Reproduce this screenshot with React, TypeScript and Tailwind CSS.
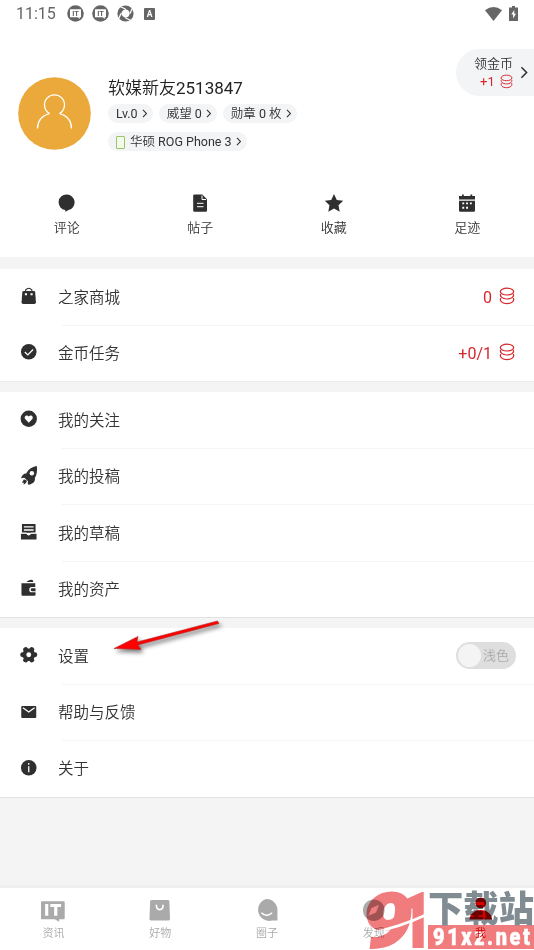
import type { ReactNode } from 'react';

type IconProps = { className?: string };

const CJK = "font-['Roboto','Noto_Sans_CJK_SC_DemiLight','Noto_Sans_CJK_SC',sans-serif]";

function Chevron({ className }: IconProps) {
    return (
        <svg viewBox="0 0 6 10" className={className} fill="none" stroke="currentColor" strokeWidth="1.2">
            <path d="M1 1l4 4-4 4" />
        </svg>
    );
}

function Coins({ className }: IconProps) {
    return (
        <svg viewBox="0 0 16 18" className={className} fill="none" stroke="#d8262c" strokeWidth="1.2">
            <ellipse cx="8" cy="4.6" rx="6.7" ry="3.4" />
            <path d="M1.8 6.8C.4 9.4 3.5 12 8 12s7.600-2.600 6.200-5.200" />
            <path d="M1.8 11C.2 13.800 3.200 16.600 8 16.600s7.800-2.800 6.200-5.600" />
        </svg>
    );
}

function ItBadge() {
    return (
        <svg viewBox="0 0 17 17" className="size-[17px]">
            <circle cx="8.5" cy="8.5" r="8.3" fill="#666" />
            <path d="M3 4.300h11v8h-1.300v1.700l-2-1.700H3z" fill="#fff" />
            <text x="8.5" y="11" fontSize="7.5" fontWeight="700" textAnchor="middle" fill="#666">IT</text>
        </svg>
    );
}

function StatusBar() {
    return (
        <div className="flex h-[27px] items-center pr-[15px] pl-4 text-[#666]">
            <span className="w-[51px] pt-px text-base">11:15</span>
            <div className="flex items-center gap-2">
                <ItBadge />
                <ItBadge />
                <svg viewBox="0 0 17 17" className="size-[17px]" fill="none">
                    <circle cx="8.5" cy="8.5" r="6" stroke="#666" strokeWidth="4.200" />
                    <path d="M8.5 4l4.500 4.500-4.500 4.500L4 8.500z" fill="#fff" />
                    <path d="M8.500 4L3 1.500M13 8.500L15.500 3M8.500 13l5.500 2.500M4 8.500L1.500 14" stroke="#fff" strokeWidth="1.300" />
                </svg>
            </div>
            <svg viewBox="0 0 11 12" className="ml-[10px] h-3 w-[11px]">
                <rect width="11" height="12" rx="1" fill="#666" />
                <text x="5.5" y="9" fontSize="8.5" fontWeight="700" textAnchor="middle" fill="#fff">A</text>
            </svg>
            <svg viewBox="0 0 17 14" className="ml-auto h-[14px] w-[17px]">
                <path d="M0 3.200Q8.500-3.200 17 3.200L8.500 14z" fill="#666" />
            </svg>
            <svg viewBox="0 0 9 15" className="-mt-px mr-px ml-[7px] h-[15px] w-[9px]">
                <path d="M3 0h3v1.500h3V15H0V1.500h3z" fill="#666" />
                <path d="M5.300 4L2.300 8.600h1.800V12.500L7 7.700H5.300z" fill="#fff" />
            </svg>
        </div>
    );
}

function Tag({ children }: { children: ReactNode }) {
    return (
        <span className="flex h-[19px] items-center gap-1 rounded-full bg-[#f3f4f6] pt-px pr-[5.5px] pl-2 text-[12.5px] whitespace-nowrap text-[#333]">
            {children}
            <Chevron className="mb-px h-[9px] w-[5.5px]" />
        </span>
    );
}

function Profile() {
    return (
        <div className="flex h-[149px] pl-[18px]">
            <svg viewBox="0 0 73 73" className="mt-[50px] size-[73px] shrink-0">
                <circle cx="36.5" cy="36.5" r="36.3" fill="#eba93b" />
                <g fill="none" stroke="#fff" strokeWidth="1.300">
                    <path d="M31.500 36.500a10 10 0 1 1 10 0" />
                    <path d="M19.500 51.500c0-8 5-13 12-15M53.500 51.500c0-8-5-13-12-15" />
                </g>
            </svg>
            <div className="ml-[17px] pt-[48px]">
                <div className="h-[29px] pt-px text-[17px] leading-[25px] text-[#222]">软媒新友2513847</div>
                <div className="flex gap-[6px]">
                    <Tag>Lv.0</Tag>
                    <Tag>威望 0</Tag>
                    <Tag>勋章 0 枚</Tag>
                </div>
                <div className="mt-[9px] flex">
                    <Tag>
                        <span className="mr-px h-[13px] w-[9px] rounded-[1px] border border-[#9bc46a] bg-[#f4fae9]" />
                        华硕 ROG Phone 3
                    </Tag>
                </div>
            </div>
            <div className="mt-[22px] ml-auto flex h-[47px] w-[78px] items-center rounded-l-full bg-[#f3f4f6] pl-[18px] text-[#333]">
                <div className="text-[13px] leading-[18px]">
                    <div>领金币</div>
                    <div className="flex items-center gap-[5px] pl-[6px] text-[#d8262c]">
                        +1
                        <Coins className="h-[15px] w-[13px]" />
                    </div>
                </div>
                <Chevron className="ml-[7px] h-[13px] w-2" />
            </div>
        </div>
    );
}

const shortcuts = [
    {
        label: '评论',
        icon: <path d="M9 .6a7.800 7.800 0 0 1 1.600 15.400L7.300 17.800V16.100A7.800 7.800 0 0 1 9 .6z" />,
    },
    {
        label: '帖子',
        icon: (
            <>
                <path d="M3.500.5h7.800L16 5.200V16.500q0 1.300-1.300 1.300H3.500Q2.200 17.800 2.200 16.500V1.800Q2.200.5 3.500.5z" />
                <path d="M11 1.500v4h4M6 9.300h6.500M6 12.700h6.500" stroke="#fff" fill="none" strokeWidth="1" />
            </>
        ),
    },
    {
        label: '收藏',
        icon: <path d="M9 0l2.800 6 6.400.8-4.700 4.500 1.200 6.500L9 14.600 3.300 17.800l1.200-6.500L-.2 6.800l6.400-.8z" />,
    },
    {
        label: '足迹',
        icon: (
            <>
                <path d="M1 2h3V.4h1.800V2h6.600V.4h1.800V2h2.800v3.500H1zM1 6.800h16v9.700q0 1.300-1.300 1.300H2.300Q1 17.800 1 16.500z" />
                <path d="M4.300 9.400h1.900M8.100 9.400H10M11.900 9.400h1.900M4.300 13.800h1.900M8.100 13.800H10" stroke="#fff" strokeWidth="1.900" />
            </>
        ),
    },
];

function Shortcuts() {
    return (
        <div className="grid h-[81px] grid-cols-4 pt-[18px]">
            {shortcuts.map((s) => (
                <div key={s.label} className="flex flex-col items-center text-[13px] leading-[18px] text-[#333]">
                    <svg viewBox="0 0 18 18" className="mb-[7px] size-[18px] overflow-visible" fill="#2f2f2f">
                        {s.icon}
                    </svg>
                    {s.label}
                </div>
            ))}
        </div>
    );
}

const icons = {
    mall: (
        <>
            <path d="M4 4h10q1.500 0 1.600 1.200l.8 10.500q0 1.800-1.700 1.800H3.300q-1.700 0-1.700-1.800l.8-10.500Q2.500 4 4 4z" />
            <path d="M5.800 4.500V3q3.200-3.600 6.400 0v1.500" fill="none" stroke="#2f2f2f" strokeWidth="1.100" />
            <path d="M5 7.500h2.200M10.800 7.500H13" stroke="#fff" strokeWidth="2" />
        </>
    ),
    task: (
        <>
            <circle cx="9" cy="9" r="8" />
            <path d="M5 9.200l3 3 5.500-5.500" fill="none" stroke="#fff" strokeWidth="1.300" />
        </>
    ),
    follow: (
        <>
            <circle cx="9" cy="9" r="8.400" />
            <path d="M9 13L5.300 9.200C3.600 6.800 7 4.200 9 6.800c2-2.600 5.400 0 3.700 2.400z" fill="#fff" />
        </>
    ),
    rocket: (
        <>
            <path d="M17.300-1C11 0 8 3.500 6.500 6.700 4 6.500 2.500 8 1 11.500l3.500-.5 3.700 3.700-.2 3 1.300.5c4.700-1.500 6.500-3.500 6-7C17.500 8 17.800 3.500 17.300-1z" />
            <path d="M4 12.500l-2 4 1.800-.5v2.200l2.500-2 .9-2z" />
            <circle cx="12.200" cy="6.500" r="2.300" fill="#fff" />
        </>
    ),
    drafts: (
        <>
            <path d="M2 1h14v9H2zM1 11h5.500q2.500 3.500 5 0H17v6H1z" />
            <path d="M4 4h10M4 7.200h10" stroke="#fff" strokeWidth="1.300" />
            <path d="M1 10.300h5.500q2.500 3.500 5 0H17" fill="none" stroke="#fff" strokeWidth="0.800" />
        </>
    ),
    wallet: (
        <>
            <path d="M1.500 4.300h14.200v4h-3.500a2.700 2.700 0 0 0 0 5.400h3.800V16q0 1.300-1.300 1.300h-12Q1.500 17.300 1.500 16z" />
            <path d="M6.500 3.200Q11-.5 13.500 1.500v1.700zM12.500 9.500H16v3h-3.500a1.500 1.500 0 0 1 0-3z" />
        </>
    ),
    settings: (
        <>
            <circle cx="9" cy="9" r="6.500" />
            <g stroke="#2f2f2f" strokeWidth="5" strokeLinecap="round">
                <path d="M2.700 9h12.600M5.800 3.700l6.400 10.600M12.200 3.700L5.800 14.300" />
            </g>
            <circle cx="9" cy="9" r="2.500" fill="#fff" />
        </>
    ),
    mail: (
        <>
            <rect x="1.300" y="3" width="15.400" height="12.300" rx="1" />
            <path d="M3 5l6 4.300L15 5" fill="none" stroke="#fff" strokeWidth="1.300" />
        </>
    ),
    about: (
        <>
            <circle cx="9" cy="9" r="8" />
            <path d="M9 4.200v1.800M9 7.500v6" stroke="#fff" strokeWidth="1.300" />
        </>
    ),
};

function Row({ icon, label, children }: { icon: keyof typeof icons; label: string; children?: ReactNode }) {
    return (
        <div className="flex h-[56.5px] items-center border-b border-transparent pr-[19px] pl-5 text-[15.5px] text-[#333] last:h-[55.5px]">
            <svg viewBox="0 0 18 18" className="-mt-0.5 mr-px size-[17.5px] overflow-visible" fill="#2f2f2f">
                {icons[icon]}
            </svg>
            <span className="ml-[19.5px] pt-[3px]">{label}</span>
            <div className="ml-auto flex items-center">{children}</div>
        </div>
    );
}

function Divider() {
    return <div className="-mt-px ml-[62px] h-px bg-[#f4f4f4]" />;
}

const tabs = [
    {
        label: '资讯',
        icon: (
            <g transform="translate(-1 0)">
                <path d="M1 3.200h22q1.200 0 1.200 1.200v16q0 1.200-1.200 1.200h-4.500v2.600l-4.500-2.600H1Q0 21.600 0 20.600V4.200q0-1 1-1z" />
                <path d="M4.200 6.200h3.200v12H4.200zM9.500 6.200h11v3h-3.800v9h-3.300v-9H9.500z" fill="#fff" />
            </g>
        ),
    },
    {
        label: '好物',
        icon: (
            <>
                <path d="M4 2h16q1.700 0 1.800 1.500l.7 18q0 1.500-1.500 1.500h-18q-1.500 0-1.500-1.500l.7-18Q2.300 2 4 2z" />
                <path d="M8.500 7c0 6.500 7 6.500 7 0" fill="none" stroke="#fff" strokeWidth="1.700" />
            </>
        ),
    },
    {
        label: '圈子',
        icon: (
            <>
                <path d="M11.700 1a11.200 11.200 0 0 1 11.200 11.200V23h-5.500A11.300 11.300 0 1 1 11.700 1z" />
                <path d="M6.500 15q5.500 5.500 11 0" fill="none" stroke="#fff" strokeWidth="1.600" />
            </>
        ),
    },
    {
        label: '发现',
        icon: (
            <>
                <circle cx="12" cy="12.500" r="11" />
                <path d="M17.500 7l-3.200 7.800L6.500 18l3.200-7.800z" fill="#fff" />
            </>
        ),
    },
    {
        label: '我',
        active: true,
        icon: (
            <>
                <circle cx="12" cy="5" r="5.500" />
                <path d="M.5 22c1-13 22-13 23 0z" />
            </>
        ),
    },
];

function TabBar() {
    return (
        <nav className="grid h-[65px] grid-cols-5 border-t-[3px] border-[#efefef] bg-white pt-[10px]">
            {tabs.map((t) => (
                <div key={t.label} className={`flex flex-col items-center text-[11px] leading-[16px] ${t.active ? 'text-[#d40000]' : 'text-[#aaa]'}`}>
                    <svg viewBox="0 0 24 24" className="mb-[4px] size-[23.5px] overflow-visible" fill="currentColor">
                        {t.icon}
                    </svg>
                    {t.label}
                </div>
            ))}
        </nav>
    );
}

function Watermark() {
    return (
        <svg viewBox="0 0 174 62" className="absolute right-0 bottom-0 h-[62px] w-[174px] overflow-visible font-['Roboto'] mix-blend-multiply">
            <g fill="#f17c7e" stroke="#f17c7e" fontWeight="900">
                <text x="2" y="59" fontSize="76" strokeWidth="2" textLength="50" lengthAdjust="spacingAndGlyphs" fontStyle="italic">9</text>
                <text x="39" y="59" fontSize="76" strokeWidth="2" textLength="34" lengthAdjust="spacingAndGlyphs">1</text>
            </g>
            <path d="M10 45Q38 40 68 26" stroke="#fff" strokeWidth="2.500" fill="none" />
            <rect x="68" y="37" width="106" height="24" fill="#f17c7e" />
            <text x="68" y="34" fontSize="36" fontWeight="900" fill="#808b92" textLength="106" lengthAdjust="spacingAndGlyphs" className="font-['Noto_Sans_CJK_SC']">下载站</text>
            <g transform="translate(73 57) scale(.85 1)">
                <text fontSize="23.5" fontWeight="900" fill="#fff" stroke="#fff" strokeWidth=".5" textLength="114">91xz.net</text>
            </g>
        </svg>
    );
}

export default function App() {
    return (
        <div className={`relative flex h-[950px] w-[534px] flex-col overflow-hidden bg-[#f4f4f4] ${CJK}`}>
            <header className="h-[257px] bg-white">
                <StatusBar />
                <Profile />
                <Shortcuts />
            </header>

            <section className="mt-3 border-b border-[#ececec] bg-white">
                <Row icon="mall" label="之家商城">
                    <span className="pt-0.5 text-base text-[#d8262c]">0</span>
                    <Coins className="-mt-0.5 ml-[7px] h-[18px] w-4" />
                </Row>
                <Divider />
                <Row icon="task" label="金币任务">
                    <span className="pt-0.5 text-base text-[#d8262c]">+0/1</span>
                    <Coins className="-mt-0.5 ml-[7px] h-[18px] w-4" />
                </Row>
            </section>

            <section className="mt-[10px] border-b border-[#e2e2e2] bg-white">
                <Row icon="follow" label="我的关注" />
                <Divider />
                <Row icon="rocket" label="我的投稿" />
                <Divider />
                <Row icon="drafts" label="我的草稿" />
                <Divider />
                <Row icon="wallet" label="我的资产" />
            </section>

            <section className="relative mt-[10px] border-b border-[#e2e2e2] bg-white">
                <Row icon="settings" label="设置">
                    <div className="-mr-px flex h-[27px] w-[60px] items-center rounded-full bg-[#dedede] pl-0.5 text-[13px] text-[#aaa]">
                        <span className="mr-0.5 size-[23px] rounded-full bg-[#f4f4f4]" />
                        浅色
                    </div>
                </Row>
                <Divider />
                <Row icon="mail" label="帮助与反馈" />
                <Divider />
                <div>
                    <Row icon="about" label="关于" />
                </div>
                <svg viewBox="0 0 110 36" className="absolute -top-[8px] left-[113px] h-9 w-[110px] overflow-visible drop-shadow-[2px_3px_2px_rgba(0,0,0,0.5)]">
                    <path d="M1 28.500l24-12-1 5.500L104.500 1l1.500 2.500L25 25l3 4.500z" fill="#f00" stroke="#a33" strokeWidth="0.600" />
                </svg>
            </section>

            <div className="mt-auto">
                <TabBar />
            </div>
            <Watermark />
        </div>
    );
}
